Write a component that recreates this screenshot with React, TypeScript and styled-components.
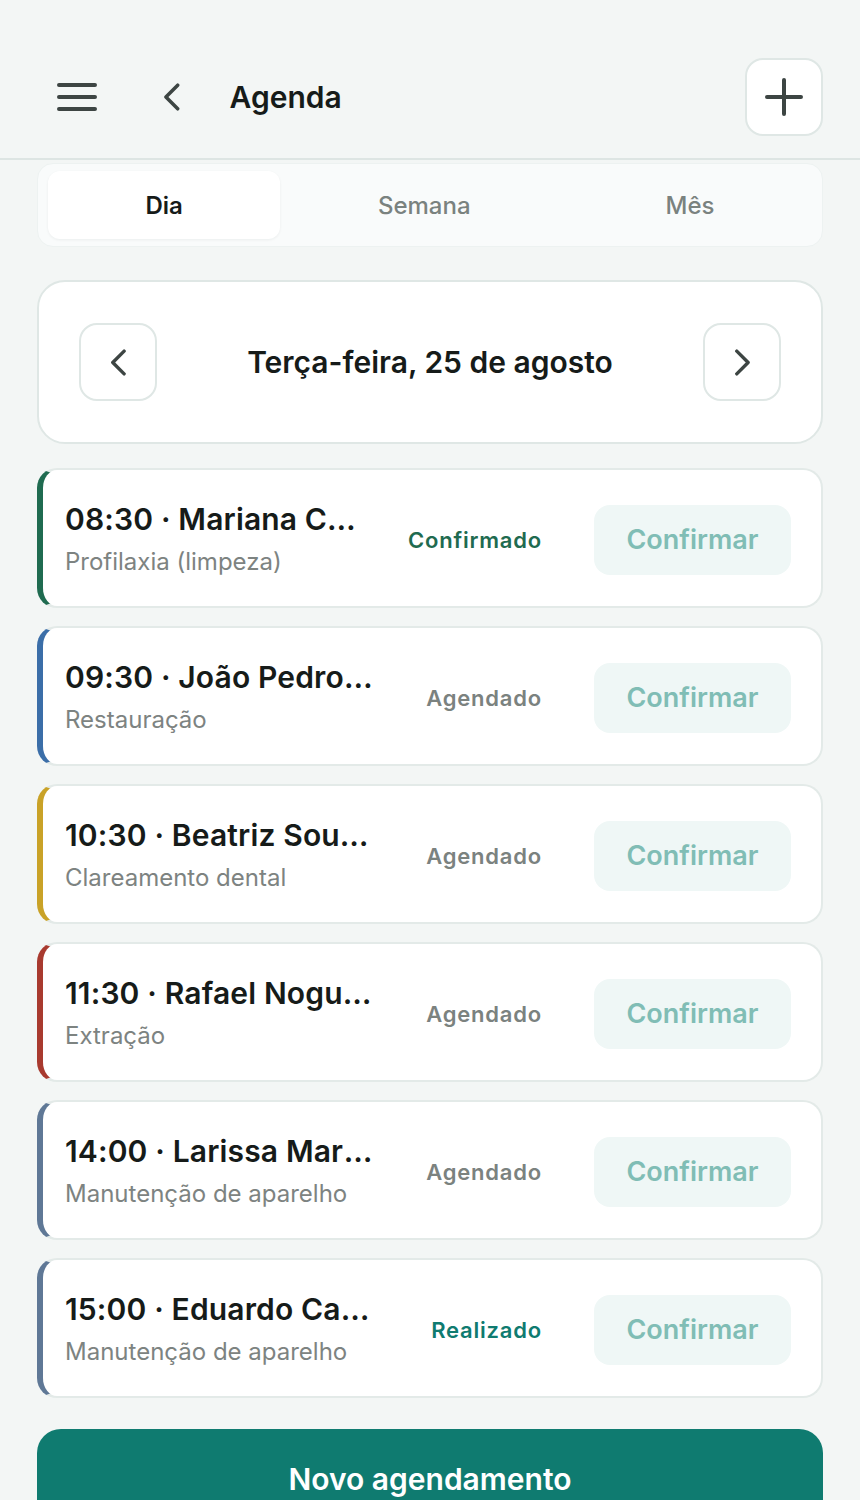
import styled, { createGlobalStyle } from 'styled-components';

const GlobalStyle = createGlobalStyle`
  body {
    margin: 0;
    background: #f3f6f5;
    font-family: Inter, "Noto Sans", sans-serif;
    color: #161b19;
  }
`;

const Page = styled.div`
  min-height: 1500px;
  background: #f3f6f5;
`;

const Header = styled.header`
  display: flex;
  align-items: center;
  padding: 58px 37px 22px 57px;
  border-bottom: 2px solid #dde5e3;
`;

const IconButton = styled.button`
  display: flex;
  align-items: center;
  justify-content: center;
  padding: 0;
  border: 0;
  background: transparent;
  color: #3d4543;
  cursor: pointer;
`;

const BackButton = styled(IconButton)`
  margin-left: 65px;
`;

const Title = styled.h1`
  flex: 1;
  margin: 0 0 0 48px;
  font-size: 30px;
  font-weight: 600;
`;

const SquareButton = styled.button`
  width: 78px;
  height: 78px;
  display: flex;
  align-items: center;
  justify-content: center;
  padding: 0;
  border: 2px solid #dfe7e5;
  border-radius: 18px;
  background: #fff;
  color: #3d4543;
  cursor: pointer;
`;

const Content = styled.main`
  display: flex;
  flex-direction: column;
  padding: 3px 37px 40px;
`;

const Tabs = styled.div`
  display: flex;
  padding: 7px 10px 7px;
  border-radius: 16px;
  background: #f9fbfb;
  border: 1px solid #edf2f1;
`;

const Tab = styled.button<{ $active?: boolean }>`
  flex: 1 1 auto;
  height: 68px;
  border: 0;
  border-radius: 12px;
  background: ${({ $active }) => ($active ? '#fff' : 'transparent')};
  box-shadow: ${({ $active }) => ($active ? '0 1px 3px rgba(20, 40, 35, 0.06)' : 'none')};
  font-family: inherit;
  font-size: 24px;
  font-weight: ${({ $active }) => ($active ? 600 : 500)};
  color: ${({ $active }) => ($active ? '#161b19' : '#7a827f')};
  cursor: pointer;
`;

const DateCard = styled.section`
  margin-top: 33px;
  display: flex;
  align-items: center;
  justify-content: space-between;
  padding: 41px 40px;
  background: #fff;
  border: 2px solid #dfe7e5;
  border-radius: 28px;
`;

const DateLabel = styled.h2`
  margin: 0;
  font-size: 30px;
  font-weight: 600;
`;

const List = styled.ul`
  list-style: none;
  margin: 24px 0 0;
  padding: 0;
  display: flex;
  flex-direction: column;
  gap: 18px;
`;

const Card = styled.li<{ $accent: string }>`
  display: flex;
  align-items: center;
  gap: 28px;
  padding: 31px 30px 28px 22px;
  background: #fff;
  border: 2px solid #e3eae8;
  border-left: 6px solid ${({ $accent }) => $accent};
  border-radius: 20px;
`;

const Info = styled.div`
  flex: 1;
  min-width: 0;
  display: flex;
  flex-direction: column;
  gap: 9px;
`;

const Name = styled.div`
  font-size: 30px;
  line-height: 36px;
  font-weight: 600;
  letter-spacing: 0.15px;
  white-space: nowrap;
  overflow: hidden;
  text-overflow: ellipsis;
`;

const Procedure = styled.div`
  font-size: 24px;
  line-height: 32px;
  color: #7d8381;
  white-space: nowrap;
  overflow: hidden;
  text-overflow: ellipsis;
`;

const Status = styled.span<{ $color: string }>`
  width: 140px;
  text-align: right;
  font-size: 22px;
  font-weight: 600;
  letter-spacing: 0.8px;
  color: ${({ $color }) => $color};
`;

const ConfirmButton = styled.button`
  margin-left: 24px;
  width: 197px;
  height: 70px;
  border: 0;
  border-radius: 16px;
  background: #eff7f6;
  color: #80bdb5;
  font-family: inherit;
  font-size: 27px;
  font-weight: 600;
  cursor: pointer;
`;

const PrimaryButton = styled.button`
  margin-top: 31px;
  height: 100px;
  border: 0;
  border-radius: 24px;
  background: #0f7b70;
  color: #fff;
  font-family: inherit;
  font-size: 30px;
  font-weight: 600;
  cursor: pointer;
`;

const MenuIcon = () => (
  <svg width="40" height="30" viewBox="0 0 40 30" fill="none" stroke="currentColor" strokeWidth="4" strokeLinecap="round">
    <path d="M2 3h36M2 15h36M2 27h36" />
  </svg>
);

const ChevronLeft = ({ size = 28 }: { size?: number }) => (
  <svg width={size * 0.7} height={size} viewBox="0 0 20 28" fill="none" stroke="currentColor" strokeWidth="3.6" strokeLinecap="round" strokeLinejoin="round">
    <path d="M16 2L4 14l12 12" />
  </svg>
);

const ChevronRight = ({ size = 28 }: { size?: number }) => (
  <svg width={size * 0.7} height={size} viewBox="0 0 20 28" fill="none" stroke="currentColor" strokeWidth="3.6" strokeLinecap="round" strokeLinejoin="round">
    <path d="M4 2l12 12L4 26" />
  </svg>
);

const PlusIcon = () => (
  <svg width="38" height="38" viewBox="0 0 38 38" fill="none" stroke="currentColor" strokeWidth="4" strokeLinecap="round">
    <path d="M19 2v34M2 19h34" />
  </svg>
);

type Appointment = {
  time: string;
  patient: string;
  procedure: string;
  status: string;
  accent: string;
  statusColor: string;
};

const appointments: Appointment[] = [
  { time: '08:30', patient: 'Mariana Costa', procedure: 'Profilaxia (limpeza)', status: 'Confirmado', accent: '#1f6b50', statusColor: '#1f6b50' },
  { time: '09:30', patient: 'João Pedro Alves', procedure: 'Restauração', status: 'Agendado', accent: '#3b6ea8', statusColor: '#7b827f' },
  { time: '10:30', patient: 'Beatriz Souza Lima', procedure: 'Clareamento dental', status: 'Agendado', accent: '#c9a227', statusColor: '#7b827f' },
  { time: '11:30', patient: 'Rafael Nogueira', procedure: 'Extração', status: 'Agendado', accent: '#a83a2f', statusColor: '#7b827f' },
  { time: '14:00', patient: 'Larissa Martins', procedure: 'Manutenção de aparelho', status: 'Agendado', accent: '#5f7896', statusColor: '#7b827f' },
  { time: '15:00', patient: 'Eduardo Campos', procedure: 'Manutenção de aparelho', status: 'Realizado', accent: '#5f7896', statusColor: '#0f7b70' },
];

export default function App() {
  return (
    <Page>
      <GlobalStyle />
      <Header>
        <IconButton aria-label="Menu">
          <MenuIcon />
        </IconButton>
        <BackButton aria-label="Voltar">
          <ChevronLeft />
        </BackButton>
        <Title>Agenda</Title>
        <SquareButton aria-label="Adicionar">
          <PlusIcon />
        </SquareButton>
      </Header>

      <Content>
        <Tabs>
          <Tab $active>Dia</Tab>
          <Tab>Semana</Tab>
          <Tab>Mês</Tab>
        </Tabs>

        <DateCard>
          <SquareButton aria-label="Dia anterior">
            <ChevronLeft size={27} />
          </SquareButton>
          <DateLabel>Terça-feira, 25 de agosto</DateLabel>
          <SquareButton aria-label="Próximo dia">
            <ChevronRight size={27} />
          </SquareButton>
        </DateCard>

        <List>
          {appointments.map((a) => (
            <Card key={a.time} $accent={a.accent}>
              <Info>
                <Name>
                  {a.time} · {a.patient}
                </Name>
                <Procedure>{a.procedure}</Procedure>
              </Info>
              <Status $color={a.statusColor}>{a.status}</Status>
              <ConfirmButton>Confirmar</ConfirmButton>
            </Card>
          ))}
        </List>

        <PrimaryButton>Novo agendamento</PrimaryButton>
      </Content>
    </Page>
  );
}
